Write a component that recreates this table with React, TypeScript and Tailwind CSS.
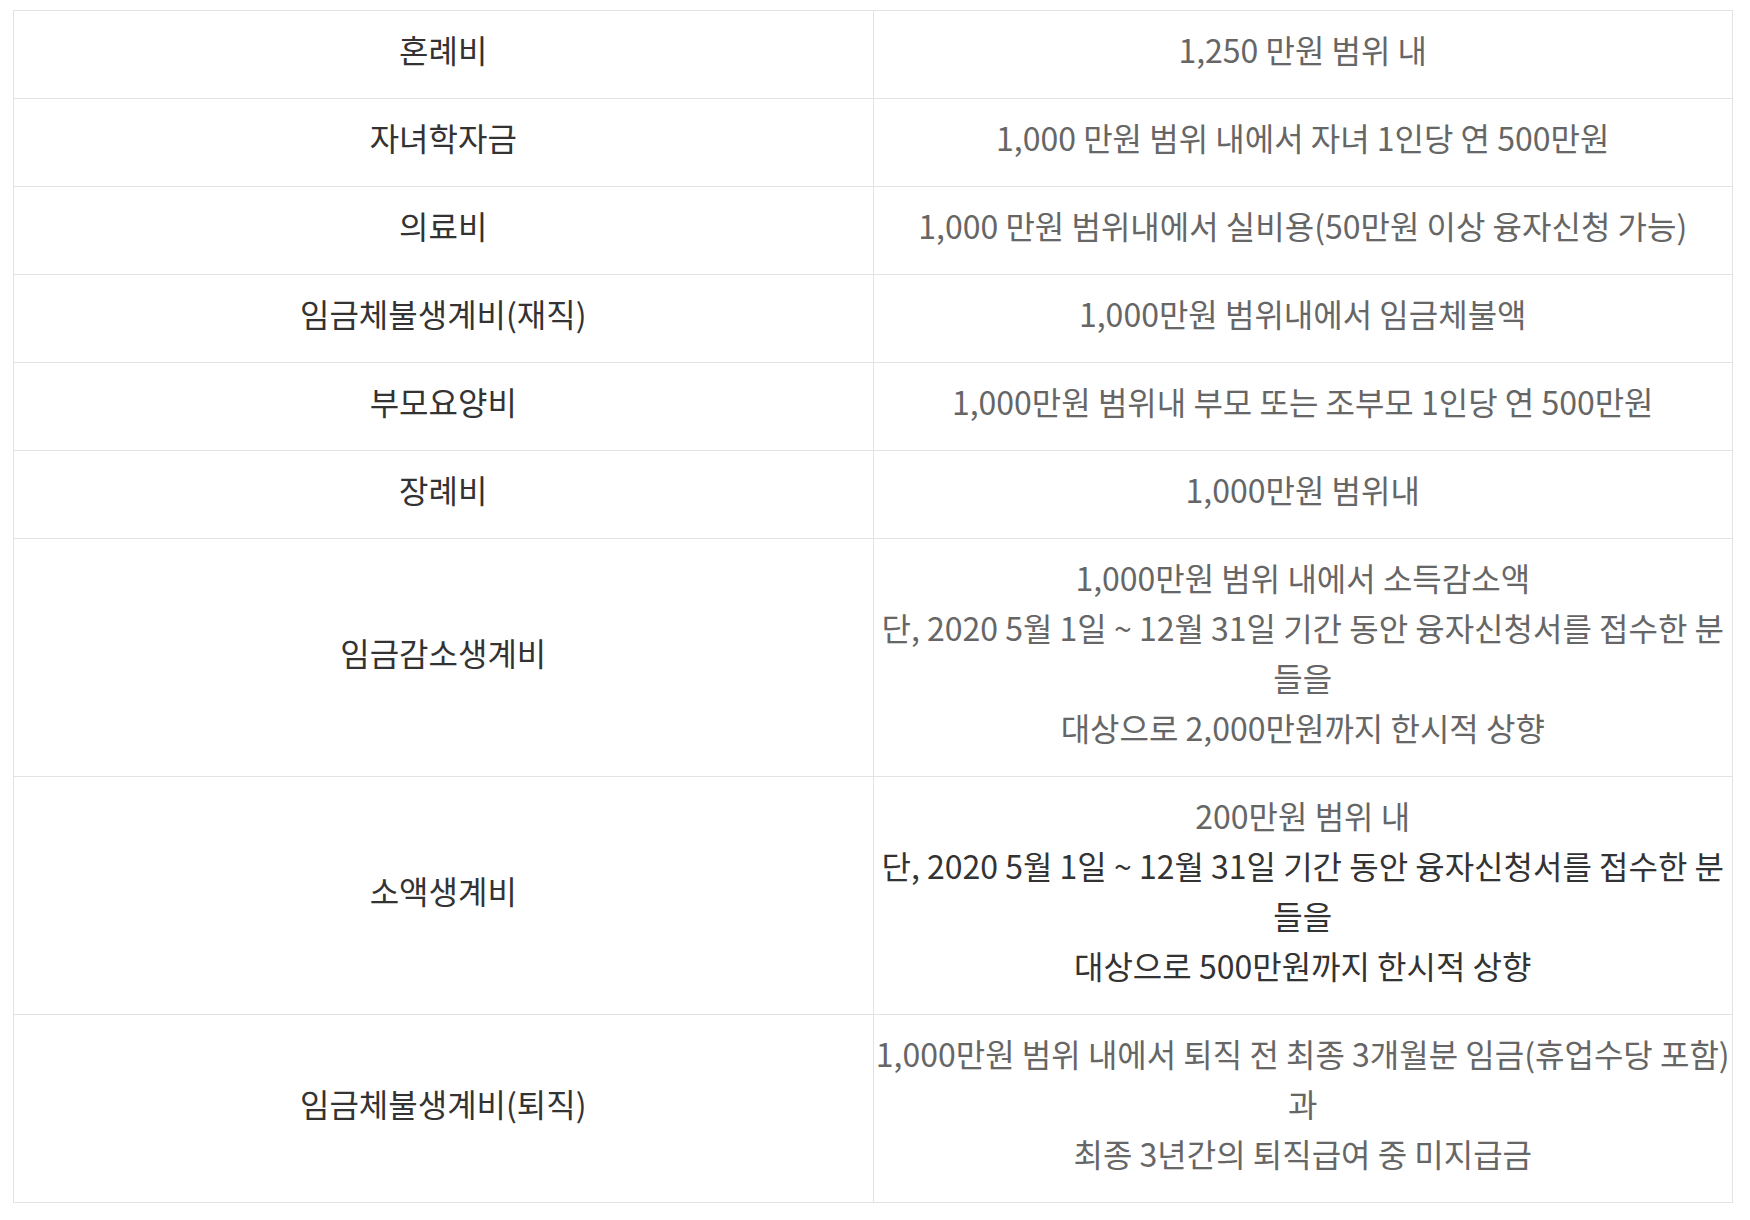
import React from 'react';

type Line = { text: string; dark?: boolean };
type Row = { label: string; lines: Line[] };

const rows: Row[] = [
  { label: '혼례비', lines: [{ text: '1,250 만원 범위 내' }] },
  { label: '자녀학자금', lines: [{ text: '1,000 만원 범위 내에서 자녀 1인당 연 500만원' }] },
  { label: '의료비', lines: [{ text: '1,000 만원 범위내에서 실비용(50만원 이상 융자신청 가능)' }] },
  { label: '임금체불생계비(재직)', lines: [{ text: '1,000만원 범위내에서 임금체불액' }] },
  { label: '부모요양비', lines: [{ text: '1,000만원 범위내 부모 또는 조부모 1인당 연 500만원' }] },
  { label: '장례비', lines: [{ text: '1,000만원 범위내' }] },
  {
    label: '임금감소생계비',
    lines: [
      { text: '1,000만원 범위 내에서 소득감소액' },
      { text: '단, 2020 5월 1일 ~ 12월 31일 기간 동안 융자신청서를 접수한 분' },
      { text: '들을' },
      { text: '대상으로 2,000만원까지 한시적 상향' },
    ],
  },
  {
    label: '소액생계비',
    lines: [
      { text: '200만원 범위 내' },
      { text: '단, 2020 5월 1일 ~ 12월 31일 기간 동안 융자신청서를 접수한 분', dark: true },
      { text: '들을', dark: true },
      { text: '대상으로 500만원까지 한시적 상향', dark: true },
    ],
  },
  {
    label: '임금체불생계비(퇴직)',
    lines: [
      { text: '1,000만원 범위 내에서 퇴직 전 최종 3개월분 임금(휴업수당 포함)' },
      { text: '과' },
      { text: '최종 3년간의 퇴직급여 중 미지급금' },
    ],
  },
];

export default function App() {
  return (
    <div className="min-h-[1220px] w-[1750px] bg-white pl-[13px] pt-[10px] font-['Noto_Sans_CJK_KR','Noto_Sans',sans-serif]">
      <table className="w-[1720px] table-fixed border-collapse text-[32px] leading-[50px]">
        <tbody>
          {rows.map((row) => (
            <tr key={row.label}>
              <td className="w-1/2 border border-[#e3e3e3] px-1 pt-[13px] pb-[24px] text-center text-[#333]">
                {row.label}
              </td>
              <td className="w-1/2 border border-[#e3e3e3] px-[2px] pt-[13px] pb-[24px] text-center text-[#666]">
                {row.lines.map((line, i) => (
                  <span key={i} className={`block whitespace-nowrap ${line.dark ? 'text-[#333]' : ''}`}>
                    {line.text}
                  </span>
                ))}
              </td>
            </tr>
          ))}
        </tbody>
      </table>
    </div>
  );
}
